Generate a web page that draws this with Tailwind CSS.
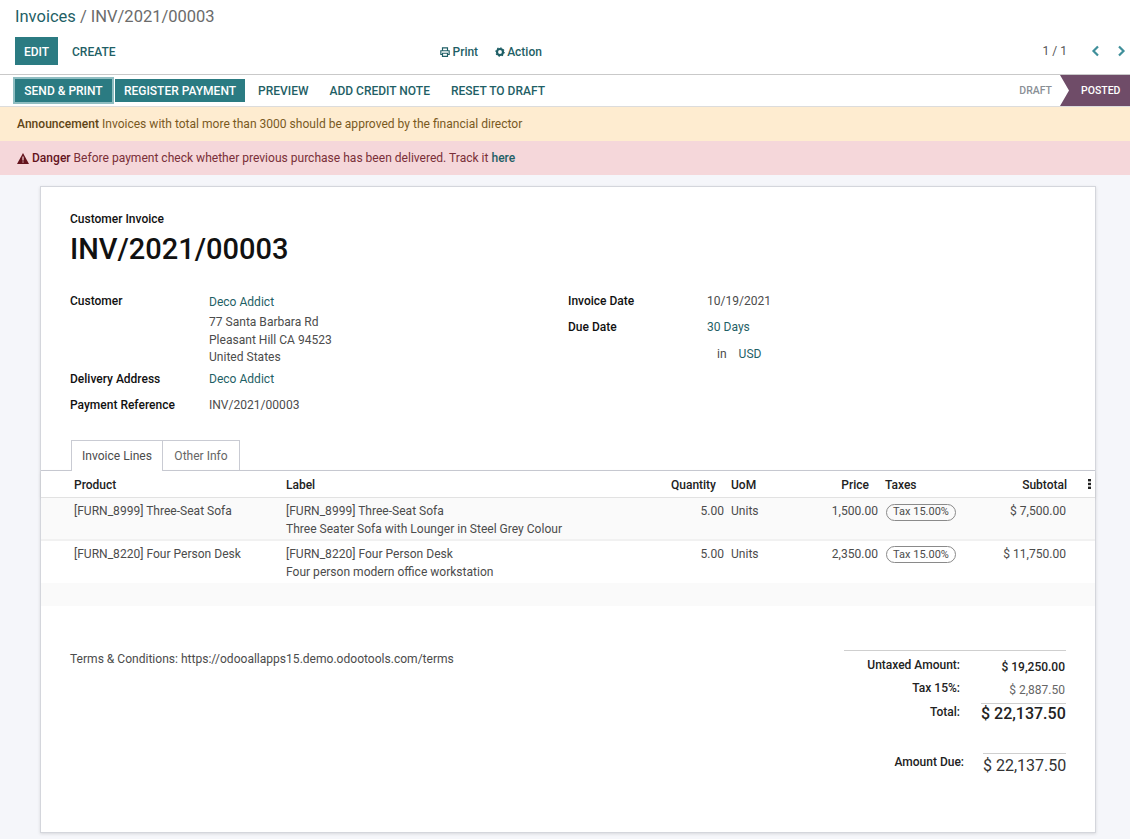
<!DOCTYPE html>
<html><head><meta charset="utf-8"><script src="https://cdn.jsdelivr.net/npm/@tailwindcss/browser@4"></script></head>
<body class="m-0 bg-[#f5f6fa] font-['Roboto',sans-serif] text-[12.05px] leading-[18px] text-[#4c4c4c] h-[839px] w-[1130px] overflow-hidden">
<header class="bg-white h-[75px] border-b border-[#c9c9c9] px-[15px] pt-[7px]">
  <div class="text-[16.5px] leading-[20px] h-[22px] text-[#6b6b6b]"><span class="text-[#1f5f66]">Invoices</span> / INV/2021/00003</div>
  <div class="mt-2 flex items-center h-[28px]">
    <button class="h-[28px] w-[43px] bg-[#2b7b82] text-white text-[12px] font-medium pt-[1px]">EDIT</button>
    <button class="ml-[14px] text-[#1f5f66] text-[12px] font-medium pt-[1px]">CREATE</button>
    <div class="ml-[325px] flex items-center gap-[17px] text-[#1f5f66] font-medium text-[12px] pt-[1px]">
      <span class="flex items-center gap-[2px]"><svg width="10" height="10" viewBox="0 0 12 12" fill="none" stroke="#1f5f66" stroke-width="1.4"><path d="M3 4V1h6v3M3 9H1V4.5h10V9H9"/><path d="M3 7.5h6v3.8H3z"/></svg>Print</span>
      <span class="flex items-center gap-[2px]"><svg width="10" height="10" viewBox="0 0 12 12"><circle cx="6" cy="6" r="3.6" fill="none" stroke="#1f5f66" stroke-width="2.6"/><circle cx="6" cy="6" r="5" fill="none" stroke="#1f5f66" stroke-width="1.4" stroke-dasharray="1.6 2.3"/></svg>Action</span>
    </div>
    <div class="ml-auto -mr-[11px] flex items-center text-[#555] text-[12px]">
      <span>1 / 1</span>
      <svg class="ml-[24px]" width="9" height="12" viewBox="0 0 9 12" fill="none" stroke="#3f8f9a" stroke-width="2.2"><path d="M7 1.5 2.5 6 7 10.5"/></svg>
      <svg class="ml-[17px]" width="9" height="12" viewBox="0 0 9 12" fill="none" stroke="#3f8f9a" stroke-width="2.2"><path d="M2 1.5 6.5 6 2 10.5"/></svg>
    </div>
  </div>
</header>
<div class="bg-white h-[32px] border-b border-[#dcdcdc] flex items-stretch pl-[15px]">
  <div class="flex items-center h-[31px] text-[12px] font-medium">
    <button class="h-[23px] w-[97px] bg-[#2b7b82] text-white ring-[2px] ring-[#8fbdc1]">SEND &amp; PRINT</button>
    <button class="ml-[3px] h-[23px] w-[130px] bg-[#2b7b82] text-white">REGISTER PAYMENT</button>
    <span class="ml-[13px] text-[#1f5f66]">PREVIEW</span>
    <span class="ml-[21px] text-[#1f5f66]">ADD CREDIT NOTE</span>
    <span class="ml-[21px] text-[#1f5f66]">RESET TO DRAFT</span>
  </div>
  <div class="ml-auto flex items-center h-[31px] text-[10.5px] font-medium">
    <span class="text-[#8a8f96] mr-[8px]">DRAFT</span>
    <div class="w-[70px] h-[31px] bg-[#6f4c68] text-white flex items-center pl-[21px] [clip-path:polygon(0_0,100%_0,100%_100%,0_100%,9px_50%)]">POSTED</div>
  </div>
</div>
<div class="h-[34px] bg-[#feecd0] text-[#7a5a1f] flex items-center pl-[17px]"><b class="font-medium text-[#5f4516] mr-[3px]">Announcement</b>Invoices with total more than 3000 should be approved by the financial director</div>
<div class="h-[34px] bg-[#f5d7da] text-[#7a2f38] flex items-center pl-[17px]">
  <svg class="mr-[3px]" width="12" height="11" viewBox="0 0 12 11"><path d="M6 0 12 11H0z" fill="#64141d"/><path d="M5.4 3.6h1.2v4H5.4zM5.4 8.4h1.2v1.2H5.4z" fill="#f5d7da"/></svg>
  <b class="font-medium text-[#64141d] mr-[3px]">Danger</b>Before payment check whether previous purchase has been delivered. Track it&nbsp;<b class="font-medium text-[#1f5f66]">here</b></div>
<main class="mt-[11px] ml-[40px] w-[1056px] h-[647px] bg-white border border-[#d4d6dc] shadow-[0_1px_3px_rgba(0,0,0,0.12)]">
  <div class="pl-[29px] pt-[23px] text-[#111]">
    <div class="text-[12px] leading-[18px] font-medium">Customer Invoice</div>
    <h1 class="text-[29px] leading-[36px] mt-[3px] font-medium">INV/2021/00003</h1>
    <div class="flex mt-[21px]">
      <div class="w-[498px]">
        <div class="grid grid-cols-[139px_1fr]">
          <b class="font-medium text-[12px] leading-[26px]">Customer</b>
          <div class="pt-[6px] -mb-[1px] leading-[17.4px] text-[#4c4c4c]"><span class="text-[#1f5f66]">Deco Addict</span><br><span class="block mt-[3px]">77 Santa Barbara Rd</span>Pleasant Hill CA 94523<br>United States</div>
          <b class="font-medium text-[12px] leading-[26px]">Delivery Address</b><span class="text-[#1f5f66] leading-[26px]">Deco Addict</span>
          <b class="font-medium text-[12px] leading-[26px]">Payment Reference</b><span class="text-[#4c4c4c] leading-[26px]">INV/2021/00003</span>
        </div>
      </div>
      <div class="grid grid-cols-[139px_1fr] content-start">
        <b class="font-medium text-[12px] leading-[26px]">Invoice Date</b><span class="leading-[26px] text-[#4c4c4c]">10/19/2021</span>
        <b class="font-medium text-[12px] leading-[26px]">Due Date</b><span class="leading-[26px] text-[#1f5f66]">30 Days</span>
        <span></span><span class="leading-[26px] text-[#1f5f66] ml-[7px] mt-[1px]"><span class="text-[#4c4c4c] mr-[12px] ">&nbsp;in</span>USD</span>
      </div>
    </div>
  </div>
  <div class="flex pl-[30px] mt-[22px] h-[31px] border-b border-[#c9cbd3]">
    <div class="h-[31px] w-[92px] border border-b-0 border-[#c9cbd3] bg-white flex items-center justify-center text-[#4c4c4c]">Invoice Lines</div>
    <div class="h-[30px] w-[77px] border border-l-0 border-b-0 border-[#c9cbd3] flex items-center justify-center pt-[1px] text-[#666]">Other Info</div>
  </div>
  <table class="w-[1054px] table-fixed border-collapse">
    <colgroup><col class="w-[29px]"><col class="w-[212px]"><col class="w-[382px]"><col class="w-[64px]"><col class="w-[51px]"><col class="w-[103px]"><col class="w-[96px]"><col class="w-[91px]"><col class="w-[26px]"></colgroup>
    <thead><tr class="h-[27px] text-[#222] text-[12px] leading-[16px] font-medium border-b border-[#e2e2e2] shadow-[0_1px_3px_rgba(0,0,0,0.08)]">
      <th></th><th class="text-left font-medium pl-[4px] pt-[2px]">Product</th><th class="text-left font-medium pl-[4px] pt-[2px]">Label</th><th class="text-right font-medium pr-[12px] pt-[2px]">Quantity</th><th class="text-left font-medium pl-[3px] pt-[2px]">UoM</th><th class="text-right font-medium pr-[13px] pt-[2px]">Price</th><th class="text-left font-medium pl-[3px] pt-[2px]">Taxes</th><th class="text-right font-medium pr-[2px] pt-[2px]">Subtotal</th><th class="text-right font-bold pr-[4px]"><svg class="ml-auto" width="3" height="10" viewBox="0 0 3 10" fill="#222"><rect width="3" height="2.4"/><rect y="3.8" width="3" height="2.4"/><rect y="7.6" width="3" height="2.4"/></svg></th>
    </tr></thead>
    <tbody class="align-top leading-[18px]">
      <tr class="h-[42px] bg-[#fafafa] border-b-2 border-[#f1f1f1]">
        <td></td><td class="pl-[4px] pt-[4px]">[FURN_8999] Three-Seat Sofa</td><td class="pl-[4px] pt-[4px]">[FURN_8999] Three-Seat Sofa<br>Three Seater Sofa with Lounger in Steel Grey Colour</td><td class="text-right pr-[4px] pt-[4px]">5.00</td><td class="pl-[3px] pt-[4px]">Units</td><td class="text-right pr-[4px] pt-[4px]">1,500.00</td><td class="pl-[4px] pt-[4px]"><span class="inline-flex items-center justify-center w-[70px] h-[17px] border border-[#8a8a8a] rounded-full text-[11px]">Tax 15.00%</span></td><td class="text-right pr-[3px] pt-[4px]">$ 7,500.00</td><td></td>
      </tr>
      <tr class="h-[43px]">
        <td></td><td class="pl-[4px] pt-[4px]">[FURN_8220] Four Person Desk</td><td class="pl-[4px] pt-[4px]">[FURN_8220] Four Person Desk<br>Four person modern office workstation</td><td class="text-right pr-[4px] pt-[4px]">5.00</td><td class="pl-[3px] pt-[4px]">Units</td><td class="text-right pr-[4px] pt-[4px]">2,350.00</td><td class="pl-[4px] pt-[4px]"><span class="inline-flex items-center justify-center w-[70px] h-[17px] border border-[#8a8a8a] rounded-full text-[11px]">Tax 15.00%</span></td><td class="text-right pr-[3px] pt-[4px]">$ 11,750.00</td><td></td>
      </tr>
      <tr class="h-[23px] bg-[#fafafa]"><td colspan="9"></td></tr>
    </tbody>
  </table>
  <div class="flex justify-between pl-[29px] pr-[29px] mt-[44px]">
    <div>Terms &amp; Conditions: https://odooallapps15.demo.odootools.com/terms</div>
    <div class="w-[222px] text-[#222] border-t border-[#cfcfcf] pt-[4px]">
      <div class="grid grid-cols-[116px_106px] items-start">
        <b class="font-medium text-[12px] text-right leading-[20px]">Untaxed Amount:</b><span class="text-right font-medium text-[12px] leading-[22px] pr-[1px] mt-[1px]">$ 19,250.00</span>
        <b class="font-medium text-[12px] text-right leading-[20px]">Tax 15%:</b><span class="text-right text-[12px] text-[#666] leading-[22px] mt-[1px] pr-[1px]">$ 2,887.50</span>
        <b class="font-medium text-[12px] text-right leading-[18px] mt-[2px]">Total:</b><span class="ml-[21px] text-right font-medium text-[16px] leading-[19px] border-t border-[#cfcfcf] pr-[1px] mt-[2px] whitespace-nowrap">$ 22,137.50</span>
      </div>
      <div class="grid grid-cols-[116px_106px] items-start mt-[30px]">
        <b class="font-medium text-[12px] text-right leading-[18px] translate-x-[4px]">Amount Due:</b><span class="ml-[23px] text-right text-[16px] leading-[24px] border-t border-[#cfcfcf] text-[#333] whitespace-nowrap">$ 22,137.50</span>
      </div>
    </div>
  </div>
</main>
</body></html>
